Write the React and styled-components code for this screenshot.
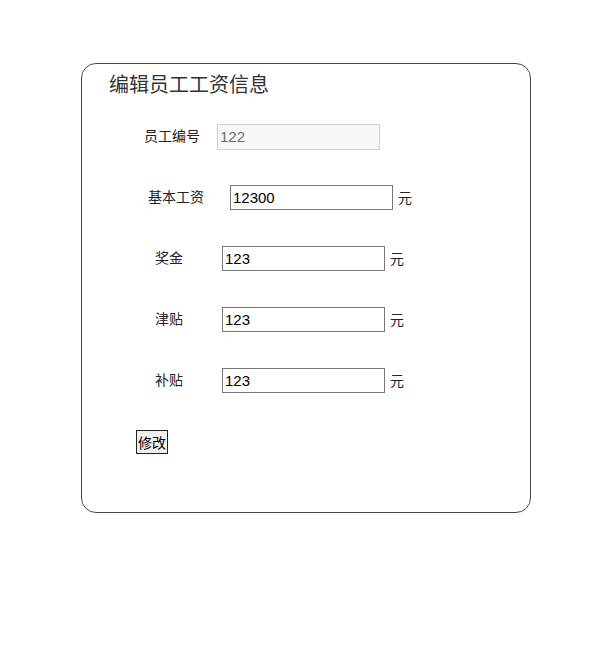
import React from 'react';
import styled, { createGlobalStyle } from 'styled-components';

const GlobalStyle = createGlobalStyle`
  body {
    margin: 8px;
    font-family: "Liberation Sans", "Noto Sans CJK SC", sans-serif;
    color: #222;
    background: #fff;
  }
`;

const Card = styled.form`
  box-sizing: border-box;
  width: 450px;
  height: 450px;
  margin: 55px 0 0 73px;
  padding-top: 6px;
  border: 1px solid #444;
  border-radius: 15px;
  display: flex;
  flex-direction: column;
`;

const Title = styled.h2`
  margin: 0 0 26px 27px;
  font: normal 20px/28px "Noto Sans CJK SC", sans-serif;
  color: #333;
`;

const Fields = styled.div`
  display: flex;
  flex-direction: column;
  gap: 36px;
`;

const Row = styled.div`
  display: flex;
  align-items: center;
  height: 25px;
  padding-left: ${({ $indent }) => $indent}px;
`;

const Label = styled.label`
  width: ${({ $width }) => $width}px;
  margin: 0 ${({ $gap }) => $gap}px 4px 0;
  font: 14px/18px "Noto Sans CJK SC", sans-serif;
  white-space: nowrap;
  color: #222;
`;

const Input = styled.input`
  box-sizing: border-box;
  width: 163px;
  height: ${({ disabled }) => (disabled ? 26 : 25)}px;
  padding: 0 2px;
  font: 15px "Liberation Sans", "Noto Sans CJK SC", sans-serif;
  color: ${({ disabled }) => (disabled ? '#6d6d6d' : '#000')};
  background: ${({ disabled }) => (disabled ? '#f7f7f7' : '#fff')};
  border: 1px solid ${({ disabled }) => (disabled ? '#d0d0d0' : '#767676')};
  outline: none;
`;

const Unit = styled.span`
  margin: 0 0 2px 5px;
  font: 14px/18px "Noto Sans CJK SC", sans-serif;
  color: #222;
`;

const SubmitButton = styled.button`
  align-self: flex-start;
  margin: 37px 0 0 54px;
  height: 24px;
  padding: 0 1px;
  font: 14px/20px "Noto Sans CJK SC", sans-serif;
  color: #000;
  background: #efefef;
  border: 1px solid #222;
  border-radius: 0;
`;

const fields = [
  { label: '员工编号', value: '122', indent: 62, width: 56, gap: 17, disabled: true },
  { label: '基本工资', value: '12300', indent: 66, width: 57, gap: 25, unit: true },
  { label: '奖金', value: '123', indent: 73, width: 28, gap: 39, unit: true },
  { label: '津贴', value: '123', indent: 73, width: 28, gap: 39, unit: true },
  { label: '补贴', value: '123', indent: 73, width: 28, gap: 39, unit: true },
];

export default function App() {
  return (
    <>
      <GlobalStyle />
      <Card onSubmit={(e) => e.preventDefault()}>
        <Title>编辑员工工资信息</Title>
        <Fields>
          {fields.map((f) => (
            <Row key={f.label} $indent={f.indent}>
              <Label $width={f.width} $gap={f.gap}>{f.label}</Label>
              <Input defaultValue={f.value} disabled={f.disabled} />
              {f.unit && <Unit>元</Unit>}
            </Row>
          ))}
        </Fields>
        <SubmitButton type="submit">修改</SubmitButton>
      </Card>
    </>
  );
}
